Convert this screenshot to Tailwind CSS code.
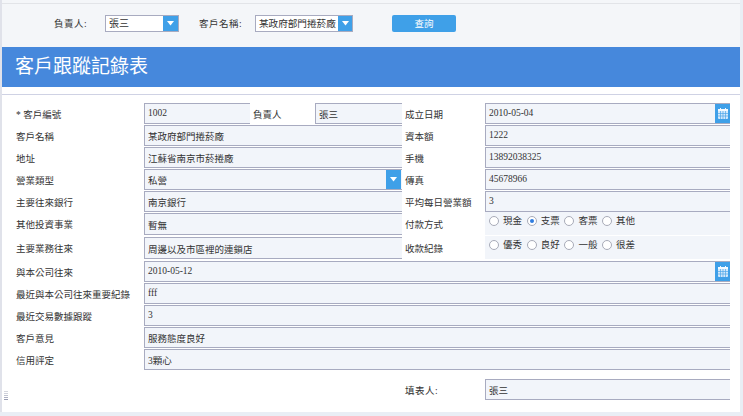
<!DOCTYPE html>
<html lang="zh-Hant">
<head>
<meta charset="utf-8">
<script src="https://cdn.jsdelivr.net/npm/@tailwindcss/browser@4"></script>
</head>
<body class="relative w-[743px] h-[416px] overflow-hidden bg-[#e9eef5] text-[#333] text-[9.5px] leading-[12px] font-['Liberation_Serif','Noto_Sans_CJK_TC',serif]">
<div class="w-[740px] h-[412px] border-l-2 border-[#e0e2ea]">
<div class="h-[3px] bg-[#f4f6f9]"></div>
<div class="h-[1px] bg-[#e2e4e8]"></div>
<div class="h-[43px] bg-[#f4f6f9] flex items-start pt-[11px] pl-[52px]">
  <span class="w-[51px] mt-[3px] tracking-[0.5px]">負責人:</span>
  <div class="w-[74px] h-[17px] border border-[#a8abc0] bg-white flex items-center justify-between">
    <span class="pl-[3px] text-[10px]">張三</span>
    <span class="w-[15px] h-full bg-[#3fa0e8] flex items-center justify-center"><svg width="7" height="5" viewBox="0 0 7 5"><path d="M0 0h7L3.500 4.500z" fill="#fff"/></svg></span>
  </div>
  <span class="ml-[20px] w-[56px] mt-[3px] tracking-[0.5px]">客戶名稱:</span>
  <div class="w-[98px] h-[17px] border border-[#a8abc0] bg-white flex items-center justify-between">
    <span class="pl-[3px] text-[9.6px] whitespace-nowrap">某政府部門捲菸廠</span>
    <span class="w-[14px] h-full bg-[#3fa0e8] flex items-center justify-center"><svg width="7" height="5" viewBox="0 0 7 5"><path d="M0 0h7L3.500 4.500z" fill="#fff"/></svg></span>
  </div>
  <button class="ml-[39px] w-[64px] h-[17px] rounded-[2px] bg-[#3fa0e8] text-white text-[9.5px]">查詢</button>
</div>
<div class="h-[365px] bg-white">
  <div class="h-[40px] bg-[#4688dc] text-white text-[19px] leading-[40px] pl-[13px]">客戶跟蹤記錄表</div>
  <div class="h-[8px] border-b border-[#cfd2e4]"></div>
  <div class="pt-[8px] pr-[8px] grid grid-cols-[142px_258px_83px_245px] items-start">
    <div class="pl-[14px] h-[22px] pt-[6px]">* 客戶編號</div>
    <div class="flex h-[21px]">
      <div class="w-[106px] border border-r-0 border-[#a8abc0] bg-[#f2f5fa] pl-[3px] pb-[1px] flex items-center">1002</div>
      <div class="w-[65px] pl-[3px] pt-[6px]">負責人</div>
      <div class="flex-1 border border-r-0 border-[#a8abc0] bg-[#f2f5fa] pl-[3px] pt-[3px] flex items-center">張三</div>
    </div>
    <div class="pl-[3px] h-[22px] pt-[6px]">成立日期</div>
    <div class="h-[21px] border border-r-0 border-[#a8abc0] bg-[#f2f5fa] pl-[3px] flex items-center justify-between"><span class="pb-[1px]">2010-05-04</span><span class="w-[15px] h-full bg-[#3fa0e8] flex items-center justify-center"><svg width="12" height="13" viewBox="0 0 12 13"><rect x="1" y="2" width="10" height="10" rx="1" fill="#d3e9fb"/><rect x="1" y="2" width="10" height="2" fill="#f4faff"/><path d="M3.500 1v2M8.500 1v2" stroke="#f4faff"/><path d="M1 6.500h10M1 9h10M3.500 4v8M6 4v8M8.500 4v8" stroke="#4fa8ea" stroke-width=".7"/></svg></span></div>

    <div class="pl-[14px] h-[22px] pt-[6px]">客戶名稱</div>
    <div class="h-[21px] border border-r-0 border-[#a8abc0] bg-[#f2f5fa] pl-[3px] pt-[3px] flex items-center">某政府部門捲菸廠</div>
    <div class="pl-[3px] h-[22px] pt-[6px]">資本額</div>
    <div class="h-[21px] border border-r-0 border-[#a8abc0] bg-[#f2f5fa] pl-[3px] pb-[1px] flex items-center">1222</div>

    <div class="pl-[14px] h-[22px] pt-[6px]">地址</div>
    <div class="h-[21px] border border-r-0 border-[#a8abc0] bg-[#f2f5fa] pl-[3px] pt-[3px] flex items-center">江蘇省南京市菸捲廠</div>
    <div class="pl-[3px] h-[22px] pt-[6px]">手機</div>
    <div class="h-[21px] border border-r-0 border-[#a8abc0] bg-[#f2f5fa] pl-[3px] pb-[1px] flex items-center">13892038325</div>

    <div class="pl-[14px] h-[22px] pt-[6px]">營業類型</div>
    <div class="h-[21px] border border-r-0 border-[#a8abc0] bg-[#f2f5fa] pl-[3px] flex items-center justify-between"><span class="pt-[3px]">私營</span><span class="w-[15px] h-full mr-[1px] bg-[#3fa0e8] flex items-center justify-center"><svg width="7" height="5" viewBox="0 0 7 5"><path d="M0 0h7L3.500 4.500z" fill="#fff"/></svg></span></div>
    <div class="pl-[3px] h-[22px] pt-[6px]">傳真</div>
    <div class="h-[21px] border border-r-0 border-[#a8abc0] bg-[#f2f5fa] pl-[3px] pb-[1px] flex items-center">45678966</div>

    <div class="pl-[14px] h-[22px] pt-[6px]">主要往來銀行</div>
    <div class="h-[21px] border border-r-0 border-[#a8abc0] bg-[#f2f5fa] pl-[3px] pt-[3px] flex items-center">南京銀行</div>
    <div class="pl-[3px] h-[22px] pt-[6px]">平均每日營業額</div>
    <div class="h-[21px] border border-r-0 border-[#a8abc0] bg-[#f2f5fa] pl-[3px] pb-[1px] flex items-center">3</div>

    <div class="pl-[14px] h-[24px] pt-[6px]">其他投資事業</div>
    <div class="h-[22px] border border-r-0 border-[#a8abc0] bg-[#f2f5fa] pl-[3px] pt-[3px] flex items-center">暫無</div>
    <div class="pl-[3px] h-[24px] pt-[6px]">付款方式</div>
    <div class="h-[23px] -mt-[1px] bg-[#f2f5fa] pl-[4px] pb-[6px] flex items-center gap-[4.700px]">
      <span class="flex items-center"><span class="w-[10px] h-[10px] mr-[4px] rounded-full border border-[#a8abb8] bg-white"></span>現金</span>
      <span class="flex items-center"><span class="w-[10px] h-[10px] mr-[4px] rounded-full border border-[#a8abb8] bg-white flex items-center justify-center"><span class="w-[4px] h-[4px] rounded-full bg-[#2f7de0]"></span></span>支票</span>
      <span class="flex items-center"><span class="w-[10px] h-[10px] mr-[4px] rounded-full border border-[#a8abb8] bg-white"></span>客票</span>
      <span class="flex items-center"><span class="w-[10px] h-[10px] mr-[4px] rounded-full border border-[#a8abb8] bg-white"></span>其他</span>
    </div>

    <div class="pl-[14px] h-[24px] pt-[6px]">主要業務往來</div>
    <div class="h-[22px] border border-r-0 border-[#a8abc0] bg-[#f2f5fa] pl-[3px] pt-[3px] flex items-center">周邊以及市區裡的連鎖店</div>
    <div class="pl-[3px] h-[24px] pt-[6px]">收款紀錄</div>
    <div class="h-[23px] -mt-[1px] bg-[#f2f5fa] pl-[4px] pb-[6px] flex items-center gap-[4.700px]">
      <span class="flex items-center"><span class="w-[10px] h-[10px] mr-[4px] rounded-full border border-[#a8abb8] bg-white"></span>優秀</span>
      <span class="flex items-center"><span class="w-[10px] h-[10px] mr-[4px] rounded-full border border-[#a8abb8] bg-white"></span>良好</span>
      <span class="flex items-center"><span class="w-[10px] h-[10px] mr-[4px] rounded-full border border-[#a8abb8] bg-white"></span>一般</span>
      <span class="flex items-center"><span class="w-[10px] h-[10px] mr-[4px] rounded-full border border-[#a8abb8] bg-white"></span>很差</span>
    </div>

    <div class="pl-[14px] h-[22px] pt-[6px]">與本公司往來</div>
    <div class="col-span-3 h-[21px] border border-r-0 border-[#a8abc0] bg-[#f2f5fa] pl-[3px] flex items-center justify-between"><span class="pb-[1px]">2010-05-12</span><span class="w-[15px] h-full bg-[#3fa0e8] flex items-center justify-center"><svg width="12" height="13" viewBox="0 0 12 13"><rect x="1" y="2" width="10" height="10" rx="1" fill="#d3e9fb"/><rect x="1" y="2" width="10" height="2" fill="#f4faff"/><path d="M3.500 1v2M8.500 1v2" stroke="#f4faff"/><path d="M1 6.500h10M1 9h10M3.500 4v8M6 4v8M8.500 4v8" stroke="#4fa8ea" stroke-width=".7"/></svg></span></div>

    <div class="pl-[14px] h-[22px] pt-[6px]">最近與本公司往來重要紀錄</div>
    <div class="col-span-3 h-[21px] border border-r-0 border-[#a8abc0] bg-[#f2f5fa] pl-[3px] pb-[1px] flex items-center">fff</div>

    <div class="pl-[14px] h-[22px] pt-[6px]">最近交易數據跟蹤</div>
    <div class="col-span-3 h-[21px] border border-r-0 border-[#a8abc0] bg-[#f2f5fa] pl-[3px] pb-[1px] flex items-center">3</div>

    <div class="pl-[14px] h-[22px] pt-[6px]">客戶意見</div>
    <div class="col-span-3 h-[21px] border border-r-0 border-[#a8abc0] bg-[#f2f5fa] pl-[3px] pt-[3px] flex items-center">服務態度良好</div>

    <div class="pl-[14px] h-[22px] pt-[6px]">信用評定</div>
    <div class="col-span-3 h-[21px] border border-r-0 border-[#a8abc0] bg-[#f2f5fa] pl-[3px] pt-[3px] flex items-center">3顆心</div>

    <div class="col-span-4 h-[8px]"></div>
    <div class="col-span-2 h-[21px]"></div>
    <div class="h-[21px] pl-[3px] pt-[6px] tracking-[0.5px]">填表人:</div>
    <div class="h-[21px] border border-r-0 border-[#a8abc0] bg-[#f2f5fa] pl-[3px] pt-[3px] flex items-center">張三</div>
  </div>
</div>
</div>
<div class="absolute left-[4px] top-[391px] w-[4px] h-[10px] flex flex-col gap-[1px]">
  <span class="h-[1px] bg-[#d4d6de]"></span>
  <span class="h-[1px] bg-[#d0d2dc]"></span>
  <span class="h-[1px] bg-[#c0c3d0]"></span>
  <span class="h-[1px] bg-[#aeb1c4]"></span>
  <span class="h-[1px] bg-[#989cb2]"></span>
</div>
</body>
</html>
